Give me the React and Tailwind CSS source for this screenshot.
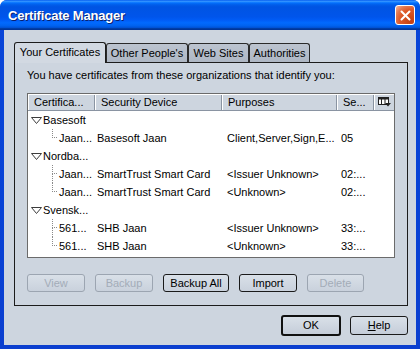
import React from "react";

const COLS = "grid grid-cols-[67px_127px_115px_37px_20px]";

function Tri() {
  return (
    <svg width="11" height="7" viewBox="0 0 11 7" className="ml-[3px] mr-[1px] shrink-0">
      <polygon points="0.5,0.5 10.5,0.5 5.5,6.5" fill="#fff" stroke="#3c3c3c" strokeWidth="1" />
    </svg>
  );
}

function GroupRow({ label }) {
  return (
    <div className="h-[18px] flex items-center">
      <Tri />
      <span className="whitespace-nowrap">{label}</span>
    </div>
  );
}

function ChildRow({ c1, c2, c3, c4, last }) {
  return (
    <div className={`${COLS} h-[18px]`}>
      <div className="flex items-stretch overflow-hidden">
        <div className="w-[24px] shrink-0" />
        <div className="w-[5px] shrink-0 flex flex-col">
          <div className="h-[9px] border-l border-b border-dotted border-[#8a8a8a]" />
          <div className={`flex-1 ${last ? "" : "border-l border-dotted border-[#8a8a8a]"}`} />
        </div>
        <span className="ml-[2px] self-center whitespace-nowrap">{c1}</span>
      </div>
      <div className="pl-[2px] flex items-center whitespace-nowrap overflow-hidden">{c2}</div>
      <div className="pl-[5px] flex items-center whitespace-nowrap overflow-hidden">{c3}</div>
      <div className="pl-[4px] flex items-center whitespace-nowrap overflow-hidden">{c4}</div>
      <div />
    </div>
  );
}

function Btn({ children, w, disabled }) {
  return (
    <div
      className={`h-[18px] ${w} rounded-[3px] border flex items-center justify-center bg-[linear-gradient(180deg,#d9e0e8_0%,#c9d1dc_100%)] ${
        disabled ? "border-[#9ca5b1] text-[#a3acb8]" : "border-[#1a1a1a] text-black"
      }`}
    >
      {children}
    </div>
  );
}

export default function App() {
  return (
    <div className="w-[420px] h-[349px] bg-white font-['Liberation_Sans',Arial,sans-serif] text-[11px] leading-[13px] text-black">
      <div className="w-[420px] h-[349px] flex flex-col rounded-t-[7px] bg-[linear-gradient(180deg,#0a46d8_0%,#0842d6_60%,#0b3fcf_100%)] overflow-hidden">
        {/* Title bar */}
        <div className="h-[30px] shrink-0 flex items-center justify-between bg-[linear-gradient(180deg,#0058ee_0%,#3593ff_4%,#288eff_6%,#127dff_8%,#036ffc_10%,#0262ee_14%,#0057e5_20%,#0054e3_24%,#0055eb_56%,#005bf5_66%,#026afe_76%,#0062ef_86%,#0052d6_92%,#0040ab_94%,#003092_100%)]">
          <span className="ml-[8px] mt-[1px] text-white font-bold text-[13px] leading-[16px] tracking-[-0.2px] [text-shadow:1px_1px_0_#0a1f6e]">
            Certificate Manager
          </span>
          <div className="mr-[5px] w-[20px] h-[20px] rounded-[3px] border border-white flex items-center justify-center bg-[radial-gradient(circle_at_85%_85%,#c44010_0%,#de5a2a_55%,#e47a52_75%,#f7b79d_100%)]">
            <svg width="11" height="11" viewBox="0 0 11 11">
              <line x1="1.5" y1="1.5" x2="9.5" y2="9.5" stroke="#fff" strokeWidth="2" strokeLinecap="round" />
              <line x1="9.5" y1="1.5" x2="1.5" y2="9.5" stroke="#fff" strokeWidth="2" strokeLinecap="round" />
            </svg>
          </div>
        </div>

        {/* Body */}
        <div className="flex-1 mx-[4px] mb-[4px] bg-[#cdd5df] flex flex-col pl-[10px] pr-[8px] pt-[12px]">
          {/* Tabs */}
          <div className="h-[20px] flex items-end">
            <div className="relative z-10 -mb-px h-[21px] w-[92px] rounded-t-[3px] border-l border-t border-r border-[#1c1c1c] bg-[#d2d9e2] flex items-center justify-center pb-[1px]">
              Your Certificates
            </div>
            <div className="h-[19px] w-[82px] rounded-t-[3px] border-l border-t border-r border-[#2a2a2a] bg-[linear-gradient(180deg,#bcc4d0_0%,#aeb7c4_100%)] flex items-center justify-center">
              Other People's
            </div>
            <div className="h-[19px] w-[61px] rounded-t-[3px] border-l border-t border-r border-[#2a2a2a] bg-[linear-gradient(180deg,#bcc4d0_0%,#aeb7c4_100%)] flex items-center justify-center">
              Web Sites
            </div>
            <div className="h-[19px] w-[61px] rounded-t-[3px] border-l border-t border-r border-[#2a2a2a] bg-[linear-gradient(180deg,#bcc4d0_0%,#aeb7c4_100%)] flex items-center justify-center">
              Authorities
            </div>
          </div>

          {/* Panel */}
          <div className="h-[244px] border border-[#1c1c1c] bg-[#cdd5df] px-[12px] pt-[6px] pb-[13px] flex flex-col">
            <div className="h-[13px] whitespace-nowrap">
              You have certificates from these organizations that identify you:
            </div>

            {/* List */}
            <div className="mt-[11px] h-[165px] border border-[#6b6b6b] bg-white flex flex-col overflow-hidden">
              <div className={`${COLS} h-[17px] bg-[#cdd5df] border-b border-[#8a94a2]`}>
                <div className="pl-[6px] flex items-center whitespace-nowrap shadow-[inset_1px_1px_0_#fff,inset_-1px_0_0_#8a94a2]">Certifica...</div>
                <div className="pl-[6px] flex items-center whitespace-nowrap shadow-[inset_1px_1px_0_#fff,inset_-1px_0_0_#8a94a2]">Security Device</div>
                <div className="pl-[6px] flex items-center whitespace-nowrap shadow-[inset_1px_1px_0_#fff,inset_-1px_0_0_#8a94a2]">Purposes</div>
                <div className="pl-[6px] flex items-center whitespace-nowrap shadow-[inset_1px_1px_0_#fff,inset_-1px_0_0_#8a94a2]">Se...</div>
                <div className="flex items-center justify-center shadow-[inset_1px_1px_0_#fff]">
                  <svg width="13" height="10" viewBox="0 0 13 10">
                    <rect x="0.5" y="0.5" width="10" height="7" fill="#fff" stroke="#222" />
                    <rect x="0" y="0" width="11" height="2.5" fill="#222" />
                    <line x1="3.5" y1="2" x2="3.5" y2="8" stroke="#222" />
                    <line x1="7" y1="2" x2="7" y2="8" stroke="#222" />
                    <polygon points="7,6 13,6 10,9.5" fill="#222" />
                  </svg>
                </div>
              </div>
              <GroupRow label="Basesoft" />
              <ChildRow c1="Jaan..." c2="Basesoft Jaan" c3="Client,Server,Sign,E..." c4="05" last />
              <GroupRow label="Nordba..." />
              <ChildRow c1="Jaan..." c2="SmartTrust Smart Card" c3="<Issuer Unknown>" c4="02:..." />
              <ChildRow c1="Jaan..." c2="SmartTrust Smart Card" c3="<Unknown>" c4="02:..." last />
              <GroupRow label="Svensk..." />
              <ChildRow c1="561..." c2="SHB Jaan" c3="<Issuer Unknown>" c4="33:..." />
              <ChildRow c1="561..." c2="SHB Jaan" c3="<Unknown>" c4="33:..." last />
            </div>

            {/* Buttons */}
            <div className="mt-[16px] flex gap-[10px]">
              <Btn w="w-[58px]" disabled>View</Btn>
              <Btn w="w-[58px]" disabled>Backup</Btn>
              <Btn w="w-[66px]">Backup All</Btn>
              <Btn w="w-[58px]">Import</Btn>
              <Btn w="w-[57px]" disabled>Delete</Btn>
            </div>
          </div>

          {/* Footer */}
          <div className="mt-[9px] h-[21px] flex items-center justify-end gap-[9px]">
            <div className="w-[60px] h-[21px] rounded-[3px] border-2 border-[#111] flex items-center justify-center bg-[linear-gradient(180deg,#d9e0e8_0%,#c5cdd9_100%)]">
              OK
            </div>
            <div className="w-[58px] h-[19px] rounded-[3px] border border-[#1a1a1a] flex items-center justify-center bg-[linear-gradient(180deg,#d9e0e8_0%,#c5cdd9_100%)]">
              <span><span className="underline">H</span>elp</span>
            </div>
          </div>
        </div>
      </div>
    </div>
  );
}
